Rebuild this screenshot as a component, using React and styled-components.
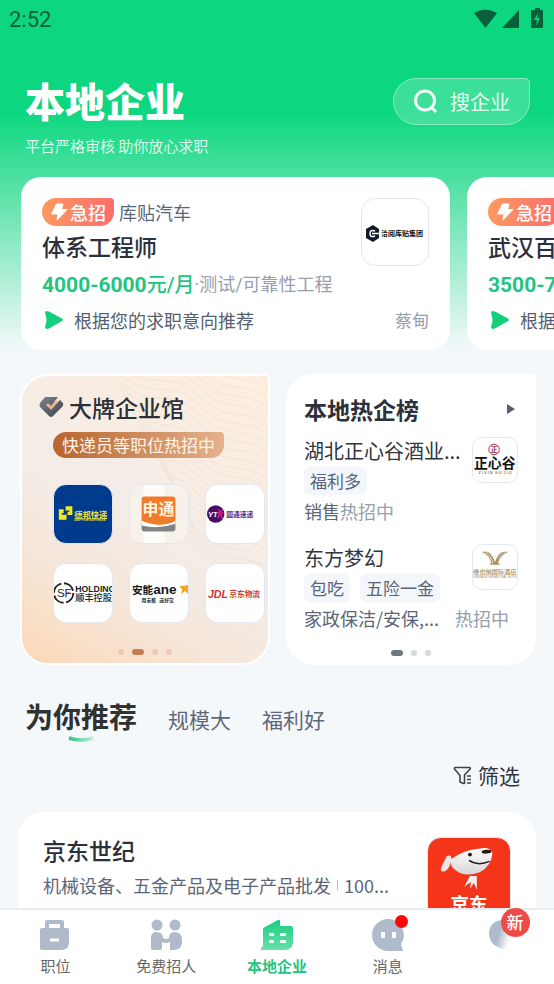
import React, { useState } from "react";
import styled, { createGlobalStyle } from "styled-components";

const GlobalStyle = createGlobalStyle`
    * {
        box-sizing: border-box;
    }
    body {
        margin: 0;
        background: #f4f8fb;
        font-family: "Noto Sans CJK SC", sans-serif;
    }
    button {
        border: 0;
        padding: 0;
        background: none;
        font-family: inherit;
        cursor: pointer;
    }
    h1, h2, h3, p {
        margin: 0;
    }
    a {
        text-decoration: none;
    }
    svg {
        display: block;
    }
`

const Page = styled.div`
    display: flex;
    flex-direction: column;
    height: 100vh;
`
const Content = styled.main`
    flex: 1;
    min-height: 0;
    overflow: hidden auto;
    scrollbar-width: none;
    background: linear-gradient(180deg, #0cd780 0, #0cd780 112px, #4be0a0 177px, #f4f8fb 350px);
`
const StatusBar = styled.div`
    display: flex;
    align-items: center;
    justify-content: space-between;
    height: 38px;
    padding: 0 9px;
    font-family: Roboto, sans-serif;
    font-size: 22px;
    color: #07603a;
`
const Header = styled.header`
    display: flex;
    align-items: flex-start;
    justify-content: space-between;
    padding: 40px 24px 0 25px;
    color: #fff;
`
const PageTitle = styled.h1`
    font-size: 40px;
    font-weight: 900;
    line-height: 44px;
`
const Subtitle = styled.p`
    margin-top: 13px;
    font-size: 15px;
    line-height: 22px;
    color: #dcfbec;
`
const SearchButton = styled.button`
    display: flex;
    align-items: center;
    gap: 12px;
    height: 47px;
    padding: 0 19px;
    border: 1px solid #8eecc2;
    border-radius: 24px 5px 24px 24px;
    background: rgba(255, 255, 255, 0.2);
    font-size: 20px;
    color: #e6fdf2;
`
const JobList = styled.section`
    display: flex;
    gap: 17px;
    margin-top: 20px;
    padding-left: 21px;
    overflow: hidden;
`
const JobCard = styled.article`
    flex: 0 0 calc(100% - 104px);
    display: flex;
    justify-content: space-between;
    padding: 21px 21px 16px;
    border-radius: 20px;
    background: #fff;
`
const JobInfo = styled.div`
    display: grid;
    gap: 6px;
    white-space: nowrap;
`
const JobSide = styled.div`
    display: flex;
    flex-direction: column;
    align-items: flex-end;
    justify-content: space-between;
    font-size: 17px;
    line-height: 28px;
    color: #959dab;
`
const JobCompany = styled.div`
    display: flex;
    align-items: center;
    gap: 5px;
    font-size: 18px;
    line-height: 28px;
    color: #5b6577;
`
const Urgent = styled.span`
    display: flex;
    align-items: center;
    gap: 1px;
    height: 28px;
    padding: 0 8px 0 7px;
    border-radius: 14px 4px 14px 14px;
    background: linear-gradient(90deg, #fd9a60, #fb6d6b);
    font-weight: 500;
    line-height: 26px;
    color: #fff;
`
const JobTitle = styled.h2`
    padding-bottom: 4px;
    font-size: 23px;
    font-weight: 500;
    line-height: 28px;
    color: #2b303a;
`
const Salary = styled.p`
    display: flex;
    align-items: center;
    font-family: Roboto, "Noto Sans CJK SC", sans-serif;
    font-size: 18px;
    line-height: 30px;
    color: #979eac;
`
const Amount = styled.strong`
    font-size: ${props => props.$unit ? "20px" : "21px"};
    font-weight: ${props => props.$unit ? 500 : 700};
    color: #22c580;
`
const Hint = styled.p`
    display: flex;
    align-items: center;
    gap: 10px;
    font-size: 18px;
    line-height: 28px;
    color: #555f6f;
`
const LogoBox = styled.div`
    flex: none;
    width: ${props => props.$size}px;
    height: ${props => props.$size}px;
    border: 1px solid #e3e7ef;
    border-radius: ${props => props.$radius || 13}px;
    background: ${props => props.$color || "#fff"};
    overflow: hidden;

    svg {
        width: 100%;
        height: 100%;
    }
`
const Panels = styled.section`
    display: grid;
    grid-template-columns: repeat(2, minmax(0, 1fr));
    gap: 16px;
    padding: 24px 18px 0 20px;
`
const Panel = styled.div`
    display: flex;
    flex-direction: column;
    position: relative;
    padding: 18px 18px 9px;
    border-radius: 28px 5px 28px 28px;
    background: #fff;
    overflow: hidden;
`
const BrandPanel = styled(Panel)`
    padding: 14px 0 8px 17px;
    border: 2px solid #fff;
    background: linear-gradient(30deg, #fbd8b8 0%, #f6e7db 28%, #f3ece7 50%, #fdeedf 100%);
`
const Waves = styled.svg`
    position: absolute;
    top: 0;
    right: 0;
`
const PanelHead = styled.div`
    position: relative;
    display: flex;
    align-items: center;
    gap: 5px;
    justify-content: ${props => props.$spread ? "space-between" : "flex-start"};
`
const PanelTitle = styled.h2`
    font-size: 23px;
    font-weight: ${props => props.$strong ? 700 : 500};
    line-height: 34px;
    color: #2b303a;
`
const IconButton = styled.button`
    display: flex;
    align-items: center;
    padding: 4px 3px;
`
const BrandNote = styled.p`
    position: relative;
    align-self: flex-start;
    margin: 8px 0 0 14px;
    padding: 0 9px;
    border-radius: 13px 4px 13px 13px;
    background: linear-gradient(90deg, #b9652f, #e4b28d);
    font-size: 17px;
    line-height: 26px;
    white-space: nowrap;
    color: #fff4e8;
`
const BrandGrid = styled.div`
    position: relative;
    display: grid;
    grid-template-columns: repeat(3, 60px);
    gap: 19px 16px;
    margin: 26px 0 26px 14px;
`
const Dots = styled.div`
    position: relative;
    display: flex;
    justify-content: center;
    gap: 8px;
    margin-top: auto;
    padding-right: ${props => props.$shift || 0}px;
`
const Dot = styled.span`
    width: ${props => props.$active ? 12 : 6}px;
    height: 6px;
    border-radius: 3px;
    background: ${props => props.$active ? props.$on : props.$off};
`
const HotItem = styled.div`
    margin-top: ${props => props.$first ? 11 : 19}px;
    white-space: nowrap;
`
const HotTop = styled.div`
    display: flex;
    justify-content: space-between;
`
const HotName = styled.h3`
    font-size: 20px;
    font-weight: 400;
    line-height: 28px;
    color: #30353e;
`
const Tags = styled.div`
    display: flex;
    gap: 10px;
    margin-top: 2px;
`
const Tag = styled.span`
    padding: 0 6px;
    border-radius: 6px;
    background: #f3f7fb;
    font-size: 17px;
    line-height: 28px;
    color: #5b6577;
`
const HotJobs = styled.p`
    display: flex;
    gap: ${props => props.$long ? 16 : 0}px;
    margin-top: 2px;
    font-size: 18px;
    line-height: 28px;
    color: #5b6577;
`
const Muted = styled.span`
    color: #979eac;
`
const Tabs = styled.div`
    display: flex;
    align-items: center;
    gap: 31px;
    padding: 28px 25px 0;
`
const TabButton = styled.button`
    position: relative;
    font-size: ${props => props.$active ? 28 : 21}px;
    font-weight: ${props => props.$active ? 700 : 400};
    line-height: 40px;
    padding-top: ${props => props.$active ? 0 : 6}px;
    color: ${props => props.$active ? "#2f3232" : "#5f6878"};
`
const Underline = styled.svg`
    position: absolute;
    left: 50%;
    bottom: -6px;
    transform: translateX(-50%);
`
const FilterRow = styled.div`
    display: flex;
    justify-content: flex-end;
    padding: 21px 34px 0;
`
const FilterButton = styled.button`
    display: flex;
    align-items: center;
    gap: 6px;
    font-size: 21px;
    line-height: 30px;
    color: #30353e;
`
const CompanyCard = styled.article`
    display: flex;
    justify-content: space-between;
    gap: 30px;
    margin: 22px 18px 0;
    padding: 25px;
    border-radius: 26px;
    background: #fff;
`
const CompanyInfo = styled.div`
    min-width: 0;
    white-space: nowrap;
`
const CompanyName = styled.h2`
    font-size: 23px;
    font-weight: 500;
    line-height: 26px;
    color: #2b303a;
`
const CompanyDetails = styled.p`
    display: flex;
    align-items: center;
    gap: 6px;
    margin-top: 8px;
    font-size: 18px;
    line-height: 28px;
    color: #5b6577;
`
const Divider = styled.span`
    width: 1px;
    height: 10px;
    background: #b9c0ca;
`
const TabBar = styled.nav`
    flex: none;
    display: grid;
    grid-template-columns: repeat(5, 1fr);
    height: 76px;
    border-top: 2px solid #e8edf0;
    background: #fff;
`
const TabLink = styled.a`
    position: relative;
    display: flex;
    flex-direction: column;
    align-items: center;
    padding-top: 9px;
    font-size: 15px;
    font-weight: ${props => props.$active ? 700 : 400};
    line-height: 22px;
    color: ${props => props.$active ? "#25c381" : "#666"};
`
const TabIcon = styled.span`
    position: relative;
    margin-bottom: 4px;
`
const RedDot = styled.span`
    position: absolute;
    top: -4px;
    right: -4px;
    width: 13px;
    height: 13px;
    border-radius: 50%;
    background: #fb0505;
`
const NewBadge = styled.span`
    position: absolute;
    top: -11px;
    right: -20px;
    width: 29px;
    height: 29px;
    border-radius: 50%;
    background: #f04a48;
    font-size: 17px;
    font-weight: 500;
    line-height: 28px;
    text-align: center;
    color: #fff;
`

const StatusIcons = () => (
    <svg width="72" height="22" viewBox="0 0 72 22" fill="#07603a">
        <path d="M1 5 Q12.500 -2 24 5 L12.500 20 Z" />
        <path d="M46 2 V20 H29 Z" />
        <path d="M60 2 H62 V0 H67 V2 H69 Q70 2 70 3 V19 Q70 20 69 20 H59 Q58 20 58 19 V3 Q58 2 59 2 Z" />
        <path d="M65 5 L61 12 H64 L63 18 L67 10 H64 Z" fill="#0cd780" />
    </svg>
)

const SearchIcon = () => (
    <svg width="25" height="25" viewBox="0 0 25 25" fill="none" stroke="#f2fff9" strokeWidth="3">
        <circle cx="12" cy="11.5" r="9.5" />
        <path d="M18 18 L23 23" />
    </svg>
)

const BoltIcon = () => (
    <svg width="20" height="20" viewBox="0 0 20 20" fill="#fff">
        <path d="M7.500 2 H14 L12.500 7.500 H18 L8 18 L9 12 H2.500 Z" stroke="#fff" strokeLinejoin="round" />
    </svg>
)

const SendIcon = () => (
    <svg width="22" height="20" viewBox="0 0 22 20">
        <path d="M3 3 Q3 0 7 1.500 L20 8.500 Q22 10 20 11 L7 18.500 Q3 20 3 16.500 Q6 10 3 3 Z" fill="#14cf7b" />
    </svg>
)

const DiamondIcon = () => (
    <svg width="25" height="22" viewBox="0 0 25 22">
        <defs>
            <linearGradient id="gem" x1="0" y1="0" x2="1" y2="1">
                <stop offset="0" stopColor="#7c858f" />
                <stop offset="1" stopColor="#3c424d" />
            </linearGradient>
        </defs>
        <path d="M6 1 H18 L24 7 Q25 9 23 11 L14 20 Q12 22 10 20 L1 11 Q0 9 1 7 Z" fill="url(#gem)" />
        <path d="M16 7 L21 1.500" fill="none" stroke="#f7e9df" strokeWidth="3" />
        <path d="M8 8 L12 12 L18 5" fill="none" stroke="#ecb48c" strokeWidth="2.800" />
    </svg>
)

const FilterIcon = () => (
    <svg width="19" height="19" viewBox="0 0 19 19" fill="none" stroke="#3d434d" strokeWidth="1.600" strokeLinejoin="round">
        <path d="M10.500 17.500 L7 16 V9.500 L1.500 3 Q1 1.500 2.500 1.500 H16 Q18 1.500 17 3 L11.500 9 V17.500 Z" />
        <path d="M14 10 H18 M14 13.500 H18 M14 17 H18" />
    </svg>
)

const CangguanLogo = () => (
    <svg viewBox="0 0 66 66">
        <path d="M11 26 L17 30 V39 L11 43 L4 39 V30 Z" fill="#101c2b" />
        <path d="M13 32 Q8 30 8 34.500 Q8 39 13 37 M10 34.500 H17" fill="none" stroke="#fff" strokeWidth="1.500" />
        <text x="19" y="37" fontSize="7" fontWeight="700" fill="#111">洽阅库贴集团</text>
    </svg>
)

const DebangLogo = () => (
    <svg viewBox="0 0 60 60">
        <path d="M5 25 H10 V30 H13 V36 H5 Z M12 22 H19 V31 H14 V27 H12 Z" fill="#f3ea1c" />
        <path d="M8 30 H13 M12 27 H16" stroke="#003a8c" strokeWidth="1.500" />
        <text x="21" y="34" fontSize="8.500" fontWeight="700" fill="#e5e532">德邦快递</text>
        <text x="21" y="37" fontSize="3.500" fontWeight="700" fontFamily="Liberation Sans" fill="#e5e532">DEPPON EXPRESS</text>
    </svg>
)

const ShentongLogo = () => (
    <svg viewBox="0 0 60 60">
        <path d="M14 0 H36 V60 H14 Z" fill="#fdfcfa" />
        <path d="M12 38 Q30 48 47 38 V45 Q47 48 44 48 H15 Q12 48 12 45 Z" fill="#858484" />
        <path d="M15 12 H44 Q47 12 47 15 V38 Q30 45 12 37 V15 Q12 12 15 12 Z" fill="#f27a2b" />
        <path d="M12 37 Q30 46 47 37 V40 Q30 46 12 42 Z" fill="#fff" />
        <text x="13" y="31" fontSize="16.500" fontWeight="700" fill="#fff5df">申通</text>
    </svg>
)

const YuantongLogo = () => (
    <svg viewBox="0 0 60 60">
        <circle cx="10" cy="30" r="9" fill="#471064" />
        <text x="2" y="33" fontSize="8" fontWeight="700" fontStyle="italic" fontFamily="Liberation Sans" fill="#fff">YT</text>
        <path d="M13 25 L17 35 M17 25 L12 34 M11 29 H18" stroke="#e0148c" strokeWidth="1.500" />
        <text x="21" y="33" fontSize="7" fontWeight="700" fill="#5b2b84">圆通速递</text>
    </svg>
)

const SfLogo = () => (
    <svg viewBox="0 0 60 60">
        <circle cx="10" cy="30" r="10" fill="none" stroke="#222" strokeWidth="2" strokeDasharray="13 2.700" />
        <text x="3" y="34.500" fontSize="12" fontFamily="Liberation Sans" fill="#222">SF</text>
        <circle cx="15" cy="30" r="1.200" fill="#d9202b" />
        <text x="22" y="29" fontSize="9" fontWeight="700" fontFamily="Liberation Sans" fill="#222">HOLDING</text>
        <text x="22" y="38" fontSize="9.500" fontWeight="500" fill="#222">顺丰控股</text>
    </svg>
)

const AneLogo = () => (
    <svg viewBox="0 0 60 60">
        <text x="2" y="31" fontSize="11" fontWeight="700" fill="#18171c">安能</text>
        <text x="24" y="31" fontSize="14" fontWeight="700" fontFamily="Liberation Sans" fill="#18171c">ane</text>
        <path d="M51 23 L60 22 V31 L57 28 L53 31 L54 26 Z" fill="#f0a51d" />
        <text x="12" y="39" fontSize="5" fontWeight="700" fill="#222">用安能&#160;&#160;&#160;送好货</text>
    </svg>
)

const JdlLogo = () => (
    <svg viewBox="0 0 60 60">
        <text x="2" y="35" fontSize="11" fontWeight="700" fontStyle="italic" fontFamily="Liberation Sans" fill="#d0302c">JDL</text>
        <text x="24" y="34" fontSize="8" fontWeight="700" fill="#c83d37">京东物流</text>
    </svg>
)

const ZhengxinguLogo = () => (
    <svg viewBox="0 0 46 46">
        <circle cx="22" cy="12" r="5.500" fill="none" stroke="#a12c40" />
        <text x="18.500" y="14.500" fontSize="7" fontWeight="700" fill="#981f33">正</text>
        <text x="1" y="31" fontSize="14.500" fontWeight="700" fill="#111">正心谷</text>
        <text x="23" y="38" fontSize="4" fontFamily="Liberation Sans" textAnchor="middle" fill="#333">Z I X I N&#160;&#160;G U&#160;&#160;J I U</text>
    </svg>
)

const HotelLogo = () => (
    <svg viewBox="0 0 46 46" fill="none" stroke="#a9905c">
        <path d="M10 7 Q18 10 20 20 M13 7 Q20 10 22 20 M16 8 Q21 12 23 20 M36 7 Q28 10 25 20 M33 7 Q26 10 24 20 M30 8 Q25 12 23 20 M18 20 H28" strokeWidth="1.200" />
        <text x="0" y="30" fontSize="6.500" fontWeight="500" stroke="none" fill="#a58d5c">维也纳国际酒店</text>
        <text x="0" y="35" fontSize="3" stroke="none" fontFamily="Liberation Sans" fill="#a58d5c">VIENNA INTERNATIONAL HOTEL</text>
    </svg>
)

const JingdongLogo = () => (
    <svg viewBox="0 0 84 84">
        <defs>
            <linearGradient id="dog" x1="0" y1="0" x2="0" y2="1">
                <stop offset="0" stopColor="#fff" />
                <stop offset="1" stopColor="#d9d5d5" />
            </linearGradient>
        </defs>
        <path d="M19 19 Q24 16 24 22 L22 29 Q18 36 14 34 Q12 33 15 27 Z" fill="#ebe7e7" />
        <path d="M23 22 Q37 12 52 11 Q64 8 66 16 Q65 29 53 35 Q37 41 27 32 Q22 28 23 22 Z" fill="url(#dog)" />
        <ellipse cx="60" cy="14" rx="5" ry="2" fill="#251918" transform="rotate(-5 60 14)" />
        <circle cx="43" cy="17" r="2" fill="#251918" />
        <path d="M42 23 Q51 29 63 24" fill="none" stroke="#251918" strokeWidth="1.500" />
        <path d="M43 39 H50 V53 L47 46 L43 52 L44 45 L37 50 Z" fill="#f2eeee" />
        <text x="42" y="75" fontSize="19" fontWeight="700" textAnchor="middle" fill="#fff">京东</text>
    </svg>
)

const BriefcaseIcon = () => (
    <svg width="32" height="32" viewBox="0 0 32 32">
        <path d="M8 10 V3 H23 V10" fill="none" stroke="#afbacb" strokeWidth="4" strokeLinejoin="round" />
        <path d="M3 9 H28 Q30 9 30 11 V23 Q30 31 22 31 H3 Q1 31 1 29 V11 Q1 9 3 9 Z" fill="#afbacb" />
        <path d="M11 21 H20" stroke="#fff" strokeWidth="3" />
    </svg>
)

const PeopleIcon = () => (
    <svg width="32" height="32" viewBox="0 0 32 32" fill="#afbacb">
        <circle cx="7" cy="6" r="5.500" />
        <circle cx="25" cy="6" r="5.500" />
        <path d="M6 13 Q13 13 13 19 Q16 21 19 19 Q19 13 25 13 Q32 14 32 20 V24 Q31 31 24 31 H20 V23 Q16 25 12 23 V29 Q12 31 10 31 H3 Q1 31 1 29 V19 Q1 13 6 13 Z" />
    </svg>
)

const BuildingIcon = () => (
    <svg width="32" height="32" viewBox="0 0 32 32">
        <defs>
            <linearGradient id="tower" x1="0" y1="0" x2="0" y2="1">
                <stop offset="0" stopColor="#18cf80" />
                <stop offset="1" stopColor="#69dfa8" />
            </linearGradient>
        </defs>
        <path d="M2 9 L17 1 Q19 0 19 2 V7 H30 Q32 7 32 9 V24 Q31 31 24 31 H0 V29 L2 27 Z" fill="url(#tower)" />
        <path d="M8 14 H13 V17 H8 Z M19 14 H25 V17 H19 Z M8 21 H13 V24 H8 Z M19 21 H25 V24 H19 Z" fill="#f2fff8" />
    </svg>
)

const ChatIcon = () => (
    <svg width="32" height="32" viewBox="0 0 32 32">
        <path d="M16 0 A16 16 0 0 1 29 25 L31 32 H16 A16 16 0 0 1 16 0 Z" fill="#afbacb" />
        <path d="M9 13 H13 V19 H9 Z M20 13 H24 V19 H20 Z" fill="#fff" />
    </svg>
)

const ProfileIcon = () => (
    <svg width="22" height="32" viewBox="0 0 22 32">
        <defs>
            <linearGradient id="face" x1="0" y1="0.200" x2="1" y2="0.600">
                <stop offset="0.500" stopColor="#afbacb" />
                <stop offset="1" stopColor="#fff" />
            </linearGradient>
        </defs>
        <path d="M14 1 Q20 1 22 6 V29 Q15 32 8 27 Q1 23 1 14 Q2 2 14 1 Z" fill="url(#face)" />
    </svg>
)

const jobs = [
    { id: 1, company: "库贴汽车", title: "体系工程师", pay: "4000-6000", role: "·测试/可靠性工程", area: "蔡甸" },
    { id: 2, company: "武汉百货", title: "武汉百货店员", pay: "3500-7000", role: "·店员", area: "武昌" },
]

const brands = [
    { id: "debang", color: "#003a8c", Logo: DebangLogo },
    { id: "shentong", color: "#f7f1ec", Logo: ShentongLogo },
    { id: "yuantong", Logo: YuantongLogo },
    { id: "sf", Logo: SfLogo },
    { id: "ane", Logo: AneLogo },
    { id: "jdl", Logo: JdlLogo },
]

const hotCompanies = [
    { id: 1, name: "湖北正心谷酒业...", tags: ["福利多"], work: "销售", Logo: ZhengxinguLogo },
    { id: 2, name: "东方梦幻", tags: ["包吃", "五险一金"], work: "家政保洁/安保,...", long: true, Logo: HotelLogo },
]

const tabs = ["为你推荐", "规模大", "福利好"]

// contour lines in the corner of the brand panel
const waves = [];
for (let i = 0; i < 24; i++) {
    const y = i * 9 - 70;
    waves.push(`M${50 + i * 5} ${y - 10} C${100 + i * 4} ${y + 40} 150 ${y + 5} 180 ${y + 35} S220 ${y + 45} 250 ${y + 65}`);
}

function App() {
    const [tab, setTab] = useState(tabs[0])

    const listJobs = jobs.map((job) => {
        return (<JobCard key={job.id}>
            <JobInfo>
                <JobCompany><Urgent><BoltIcon />急招</Urgent>{job.company}</JobCompany>
                <JobTitle>{job.title}</JobTitle>
                <Salary>
                    <Amount>{job.pay}</Amount>
                    <Amount $unit>元/月</Amount>
                    {job.role}
                </Salary>
                <Hint><SendIcon />根据您的求职意向推荐</Hint>
            </JobInfo>
            <JobSide>
                <LogoBox $size={68} $radius={14}><CangguanLogo /></LogoBox>
                <span>{job.area}</span>
            </JobSide>
        </JobCard>)
    });

    const listHot = hotCompanies.map((item, index) => {
        return (<HotItem key={item.id} $first={index === 0}>
            <HotTop>
                <div>
                    <HotName>{item.name}</HotName>
                    <Tags>{item.tags.map((tag) => <Tag key={tag}>{tag}</Tag>)}</Tags>
                </div>
                <LogoBox $size={46} $radius={10}><item.Logo /></LogoBox>
            </HotTop>
            <HotJobs $long={item.long}>
                <span>{item.work}</span>
                <Muted>热招中</Muted>
            </HotJobs>
        </HotItem>)
    });

    return (
        <Page>
            <GlobalStyle />
            <Content>
                <StatusBar>
                    <span>2:52</span>
                    <StatusIcons />
                </StatusBar>
                <Header>
                    <div>
                        <PageTitle>本地企业</PageTitle>
                        <Subtitle>平台严格审核 助你放心求职</Subtitle>
                    </div>
                    <SearchButton><SearchIcon />搜企业</SearchButton>
                </Header>
                <JobList>{listJobs}</JobList>
                <Panels>
                    <BrandPanel>
                        <Waves width="250" height="200" viewBox="0 0 250 200" fill="none" stroke="#f3cfa9" strokeOpacity="0.350">
                            {waves.map((d) => <path key={d} d={d} />)}
                        </Waves>
                        <PanelHead>
                            <DiamondIcon />
                            <PanelTitle>大牌企业馆</PanelTitle>
                        </PanelHead>
                        <BrandNote>快递员等职位热招中</BrandNote>
                        <BrandGrid>
                            {brands.map(({ id, color, Logo }) => (
                                <LogoBox key={id} $size={60} $color={color}><Logo /></LogoBox>
                            ))}
                        </BrandGrid>
                        <Dots $shift={18}>
                            {[0, 1, 2, 3].map((n) => <Dot key={n} $active={n === 1} $on="#c47f51" $off="#e9cbb5" />)}
                        </Dots>
                    </BrandPanel>
                    <Panel>
                        <PanelHead $spread>
                            <PanelTitle $strong>本地热企榜</PanelTitle>
                            <IconButton aria-label="更多">
                                <svg width="8" height="10" viewBox="0 0 8 10"><path d="M0 0 L8 5 L0 10 Z" fill="#555f6f" /></svg>
                            </IconButton>
                        </PanelHead>
                        {listHot}
                        <Dots>
                            {[0, 1, 2].map((n) => <Dot key={n} $active={n === 0} $on="#6f777c" $off="#d6d9da" />)}
                        </Dots>
                    </Panel>
                </Panels>
                <Tabs>
                    {tabs.map((name) => (
                        <TabButton key={name} $active={name === tab} onClick={() => setTab(name)}>
                            {name}
                            {name === tab && (
                                <Underline width="26" height="6" viewBox="0 0 26 6" fill="none">
                                    <defs>
                                        <linearGradient id="line">
                                            <stop offset="0" stopColor="#26c583" />
                                            <stop offset="1" stopColor="#bcefd8" />
                                        </linearGradient>
                                    </defs>
                                    <path d="M1 2 Q13 6 25 2" stroke="url(#line)" strokeWidth="3.500" />
                                </Underline>
                            )}
                        </TabButton>
                    ))}
                </Tabs>
                <FilterRow>
                    <FilterButton><FilterIcon />筛选</FilterButton>
                </FilterRow>
                <CompanyCard>
                    <CompanyInfo>
                        <CompanyName>京东世纪</CompanyName>
                        <CompanyDetails>机械设备、五金产品及电子产品批发<Divider />100...</CompanyDetails>
                    </CompanyInfo>
                    <LogoBox $size={84} $radius={14} $color="#f5351a"><JingdongLogo /></LogoBox>
                </CompanyCard>
            </Content>
            <TabBar>
                <TabLink href="#jobs"><TabIcon><BriefcaseIcon /></TabIcon>职位</TabLink>
                <TabLink href="#hire"><TabIcon><PeopleIcon /></TabIcon>免费招人</TabLink>
                <TabLink href="#companies" $active><TabIcon><BuildingIcon /></TabIcon>本地企业</TabLink>
                <TabLink href="#messages"><TabIcon><ChatIcon /><RedDot /></TabIcon>消息</TabLink>
                <TabLink href="#me" aria-label="我的"><TabIcon><ProfileIcon /><NewBadge>新</NewBadge></TabIcon></TabLink>
            </TabBar>
        </Page>
    );
}

export default App;
